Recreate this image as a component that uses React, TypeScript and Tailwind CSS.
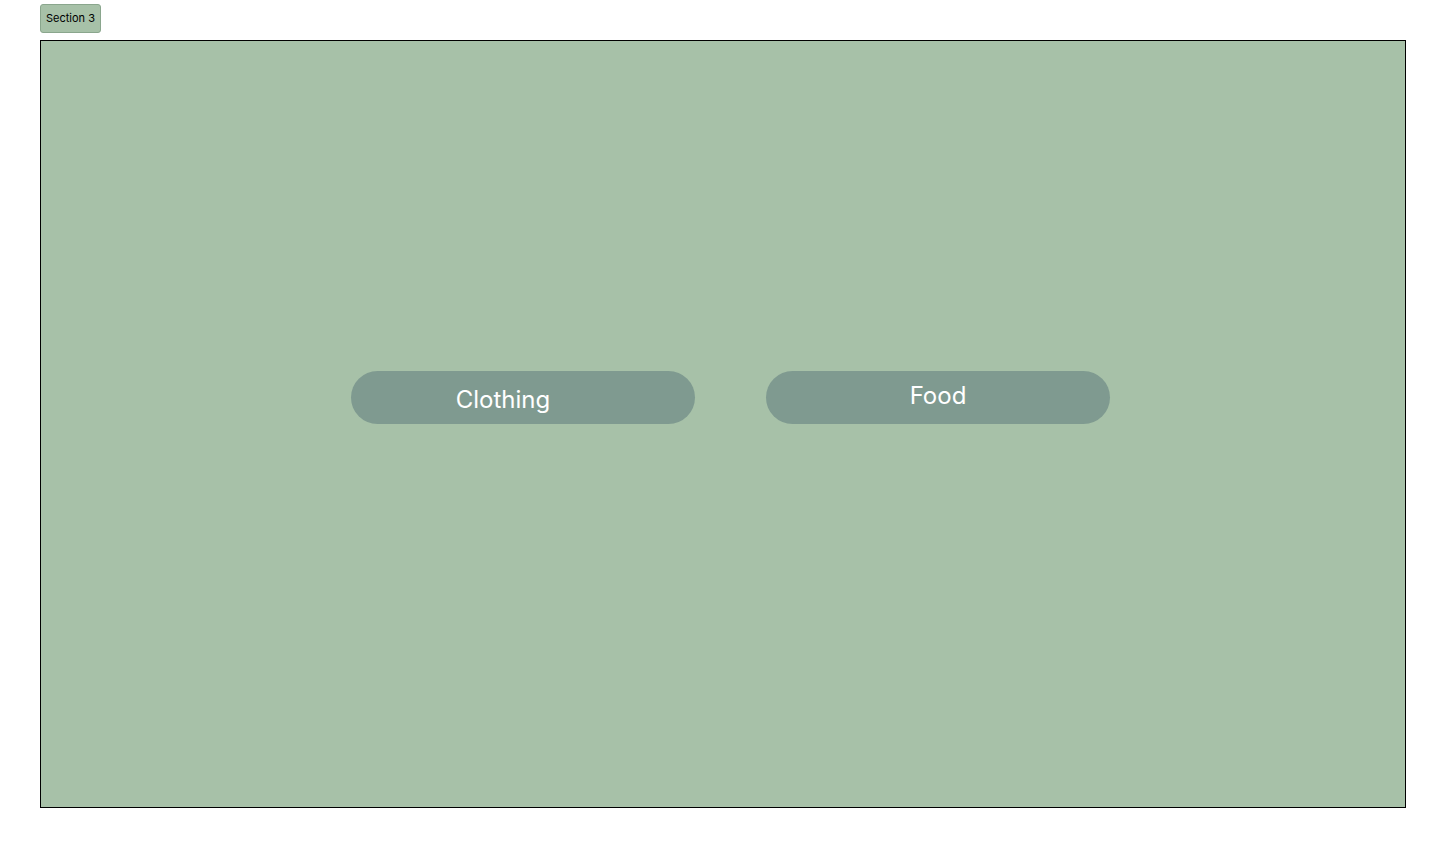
export default function App() {
  const font = { fontFamily: "Inter, 'Noto Sans', sans-serif" };

  return (
    <div className="min-h-screen bg-white pl-[40px] pt-[4px]" style={font}>
      {/* section tab */}
      <button className="h-[29px] px-[5px] text-[11px] text-black bg-[#a7c1a8] border border-[#8aa68d] rounded-[3px] leading-none">
        Section 3
      </button>

      {/* main canvas */}
      <div className="mt-[7px] w-[1366px] h-[768px] bg-[#a7c1a8] border border-black">
        <div className="flex gap-[71px] pt-[330px] pl-[310px]">
          <button className="w-[344px] h-[53px] rounded-full bg-[#7f9a90] text-white text-[24px] pr-[40px] pt-[4px]">
            Clothing
          </button>
          <button className="w-[344px] h-[53px] rounded-full bg-[#7f9a90] text-white text-[24px] pb-[4px]">
            Food
          </button>
        </div>
      </div>
    </div>
  );
}
